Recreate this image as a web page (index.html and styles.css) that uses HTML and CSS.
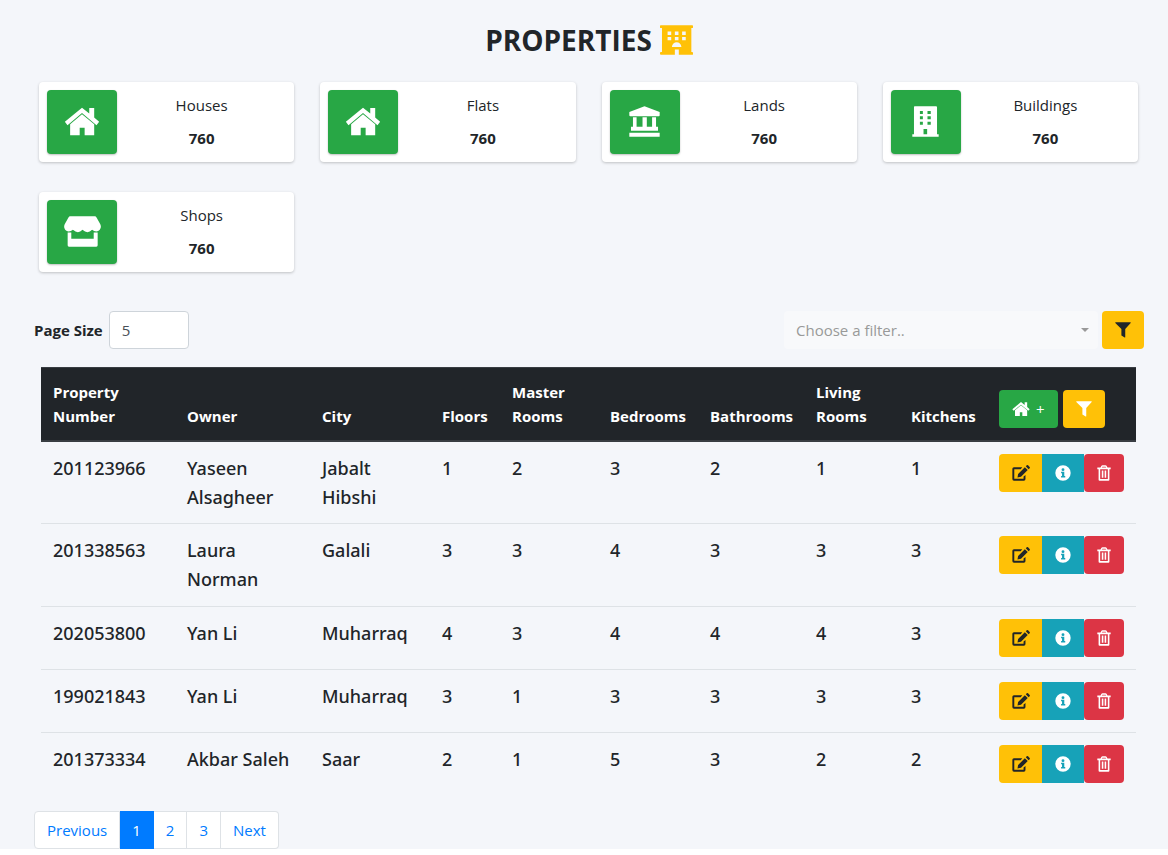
FILE: index.html
```
<!DOCTYPE html>
<html lang="en">
<head>
<meta charset="utf-8">
<title>Properties</title>
<link rel="stylesheet" href="styles.css">
</head>
<body>
<svg class="sprite" aria-hidden="true">
  <symbol id="home" viewBox="0 0 108 88"><path d="M54 2 2 45l8 10 44-37 44 37 8-10-15-13V3H76v17z"/><path d="M54 22 18 52v34h29V63h15v23h29V52z"/></symbol>
  <symbol id="bank" viewBox="0 0 94 94"><path d="M47 1 1 18v10q0 3 3 3h86q3 0 3-3V18zM12 34h11v29h18V34h13v29h16V34h12v29h6v12H6V63h6zM1 81h92v12H1z"/></symbol>
  <symbol id="building" viewBox="0 0 82 94"><path fill-rule="evenodd" d="M8 1h65q3 0 3 3v82h5v7H1v-7h5V4q0-3 2-3zM24 15v9h9v-9zm23 0v9h10v-9zM24 31v9h9v-9zm23 0v9h10v-9zM24 48v9h9v-9zm23 0v9h10v-9zM35 70v16h11V70z"/></symbol>
  <symbol id="shop" viewBox="0 0 112 94"><path d="M19 1h74q4 0 6 4l11 20c5 10-2 22-12 22q-7 0-13-5-7 7-14 7t-15-7q-7 7-14 7t-15-7q-6 5-13 5C4 47-3 35 2 25L13 5q2-4 6-4z"/><path d="M11 50h11v19h68V50h12v39q0 4-4 4H15q-4 0-4-4z"/></symbol>
  <symbol id="hotel" viewBox="0 0 100 90"><path fill-rule="evenodd" d="M2 0h96q2 0 2 3v4q0 2-3 2h-2v72h2q3 0 3 3v4q0 2-3 2H57V74H45v16H3q-3 0-3-3v-3q0-3 3-3h3V9H3Q0 9 0 7V3q0-3 2-3zM23 19v11h11V19zm22 0v11h11V19zm22 0v11h11V19zM23 36v10h11V36zm22 0v10h11V36zm22 0v10h11V36zM36 66h29c-1-19-28-19-29 0z"/></symbol>
  <symbol id="filter" viewBox="0 0 50 50"><path d="M2 1h46q2 0 1 2L32 22v25q0 3-3 1l-9-6V22L1 3Q0 1 2 1z"/></symbol>
  <symbol id="edit" viewBox="0 0 56 50"><path d="M32 7H6Q1 7 1 12v32q0 5 5 5h31q5 0 5-5V31l-6 5v7H7V13h20z"/><path d="M40 7 19 28l-2 11 11-2 21-21zM43 4l3-3q2-2 4 0l5 5q2 2 0 4l-3 3z"/></symbol>
  <symbol id="info" viewBox="0 0 50 50"><path fill-rule="evenodd" d="M25 1a24 24 0 1 0 0 48 24 24 0 0 0 0-48zm0 9a4 4 0 1 1 0 9 4 4 0 0 1 0-9zm-5 11h9v13h3v5H19v-5h3v-8h-3v-5z"/></symbol>
  <symbol id="trash" viewBox="0 0 44 50"><path fill-rule="evenodd" d="M1 8h10l3-6q1-1 3-1h10q2 0 3 1l3 6h10v5h-4v33q0 3-3 3H8q-3 0-3-3V13H1zm9 5v31h24V13zm5-5h14l-2-3H17z"/><path d="M15 17h5v23h-5zm9 0h5v23h-5z"/></symbol>
</svg>
<main class="page">
  <h1 class="title">PROPERTIES <svg class="title-icon"><use href="#hotel"/></svg></h1>
  <section class="cards">
    <article class="card"><div class="tile"><svg class="icon-home"><use href="#home"/></svg></div><div class="stat"><span>Houses</span><strong>760</strong></div></article>
    <article class="card"><div class="tile"><svg class="icon-home"><use href="#home"/></svg></div><div class="stat"><span>Flats</span><strong>760</strong></div></article>
    <article class="card"><div class="tile"><svg class="icon-bank"><use href="#bank"/></svg></div><div class="stat"><span>Lands</span><strong>760</strong></div></article>
    <article class="card"><div class="tile"><svg class="icon-building"><use href="#building"/></svg></div><div class="stat"><span>Buildings</span><strong>760</strong></div></article>
    <article class="card"><div class="tile"><svg class="icon-shop"><use href="#shop"/></svg></div><div class="stat"><span>Shops</span><strong>760</strong></div></article>
  </section>
  <div class="toolbar">
    <label class="size-label" for="size">Page Size</label>
    <input class="size" id="size" type="text" value="5">
    <div class="select-wrap"><select class="select" aria-label="Filter"><option>Choose a filter..</option></select></div>
    <button class="btn yellow dark" aria-label="Apply filter"><svg class="icon"><use href="#filter"/></svg></button>
  </div>
  <div class="table-wrap">
  <table class="table">
    <colgroup><col class="c-number"><col class="c-owner"><col class="c-city"><col class="c-floors"><col class="c-master"><col class="c-bed"><col class="c-bath"><col class="c-living"><col class="c-kitchen"><col class="c-actions"></colgroup>
    <thead><tr><th>Property Number</th><th>Owner</th><th>City</th><th>Floors</th><th>Master Rooms</th><th>Bedrooms</th><th>Bathrooms</th><th>Living Rooms</th><th>Kitchens</th>
      <th><div class="head-actions"><button class="btn green" aria-label="Add property"><svg class="icon wide"><use href="#home"/></svg><span class="plus">+</span></button><button class="btn yellow" aria-label="Filter columns"><svg class="icon"><use href="#filter"/></svg></button></div></th></tr></thead>
    <tbody>
      <tr><td>201123966</td><td>Yaseen Alsagheer</td><td>Jabalt Hibshi</td><td>1</td><td>2</td><td>3</td><td>2</td><td>1</td><td>1</td><td><div class="group"><button class="btn yellow dark" aria-label="Edit"><svg class="icon wide"><use href="#edit"/></svg></button><button class="btn teal" aria-label="Details"><svg class="icon"><use href="#info"/></svg></button><button class="btn red" aria-label="Delete"><svg class="icon narrow"><use href="#trash"/></svg></button></div></td></tr>
      <tr><td>201338563</td><td>Laura Norman</td><td>Galali</td><td>3</td><td>3</td><td>4</td><td>3</td><td>3</td><td>3</td><td><div class="group"><button class="btn yellow dark" aria-label="Edit"><svg class="icon wide"><use href="#edit"/></svg></button><button class="btn teal" aria-label="Details"><svg class="icon"><use href="#info"/></svg></button><button class="btn red" aria-label="Delete"><svg class="icon narrow"><use href="#trash"/></svg></button></div></td></tr>
      <tr><td>202053800</td><td>Yan Li</td><td>Muharraq</td><td>4</td><td>3</td><td>4</td><td>4</td><td>4</td><td>3</td><td><div class="group"><button class="btn yellow dark" aria-label="Edit"><svg class="icon wide"><use href="#edit"/></svg></button><button class="btn teal" aria-label="Details"><svg class="icon"><use href="#info"/></svg></button><button class="btn red" aria-label="Delete"><svg class="icon narrow"><use href="#trash"/></svg></button></div></td></tr>
      <tr><td>199021843</td><td>Yan Li</td><td>Muharraq</td><td>3</td><td>1</td><td>3</td><td>3</td><td>3</td><td>3</td><td><div class="group"><button class="btn yellow dark" aria-label="Edit"><svg class="icon wide"><use href="#edit"/></svg></button><button class="btn teal" aria-label="Details"><svg class="icon"><use href="#info"/></svg></button><button class="btn red" aria-label="Delete"><svg class="icon narrow"><use href="#trash"/></svg></button></div></td></tr>
      <tr><td>201373334</td><td>Akbar Saleh</td><td>Saar</td><td>2</td><td>1</td><td>5</td><td>3</td><td>2</td><td>2</td><td><div class="group"><button class="btn yellow dark" aria-label="Edit"><svg class="icon wide"><use href="#edit"/></svg></button><button class="btn teal" aria-label="Details"><svg class="icon"><use href="#info"/></svg></button><button class="btn red" aria-label="Delete"><svg class="icon narrow"><use href="#trash"/></svg></button></div></td></tr>
    </tbody>
  </table>
  </div>
  <nav class="pagination" aria-label="Pages"><a href="#">Previous</a><a class="active" href="#" aria-current="page">1</a><a href="#">2</a><a href="#">3</a><a href="#">Next</a></nav>
</main>
</body>
</html>
```
FILE: styles.css
```
* { box-sizing: border-box; }
body {
  margin: 0;
  background: #fff;
  color: #212529;
  font: 400 15px/24px "Open Sans", "Noto Sans", sans-serif;
}
.sprite { display: none; }
svg { fill: currentColor; flex: none; }
.page {
  padding: 22px 24px 0 34px;
  background: #f4f6fa;
}
.title {
  display: flex;
  align-items: center;
  justify-content: center;
  gap: 8px;
  margin: 0 0 24px;
  font-size: 28px;
  line-height: 36px;
  font-weight: 700;
}
.title-icon { width: 33px; height: 30px; color: #ffc107; }

.cards {
  display: grid;
  grid-template-columns: repeat(4, 1fr);
  gap: 30px 26px;
  padding: 0 6px 0 5px;
}
.card {
  display: flex;
  height: 80px;
  padding: 8px;
  background: #fff;
  border-radius: 4px;
  box-shadow: 0 1px 3px rgba(0, 0, 0, .22);
}
.tile {
  display: flex;
  align-items: center;
  justify-content: center;
  width: 70px;
  height: 64px;
  padding-bottom: 2px;
  background: #28a745;
  color: #fff;
  border-radius: 4px;
  box-shadow: 0 1px 2px rgba(0, 0, 0, .25);
}
.icon-home { width: 36px; height: 29px; }
.icon-bank { width: 31px; height: 31px; }
.icon-building { width: 27px; height: 31px; }
.icon-shop { width: 37px; height: 31px; }
.stat {
  flex: 1;
  display: flex;
  flex-direction: column;
  align-items: center;
  gap: 9px;
  padding-top: 3px;
}
.stat strong { font-weight: 700; }

.toolbar {
  display: flex;
  align-items: center;
  gap: 4px;
  padding-top: 39px;
}
.size-label { padding-right: 2px; font-weight: 700; }
.size {
  width: 80px;
  height: 38px;
  padding: 6px 12px;
  border: 1px solid #ced4da;
  border-radius: 4px;
  background: #fff;
  color: #495057;
  font: inherit;
}
.select-wrap { position: relative; width: 314px; margin-left: auto; }
.select-wrap::after {
  content: "";
  position: absolute;
  top: 17px;
  right: 9px;
  border: 4px solid transparent;
  border-top-color: #999;
  border-bottom: 0;
  pointer-events: none;
}
.select {
  display: block;
  appearance: none;
  width: 100%;
  height: 38px;
  padding: 0 12px;
  border: 0;
  border-radius: 4px;
  background: #f8f9fb;
  color: #999;
  font: inherit;
}
.btn {
  display: flex;
  align-items: center;
  justify-content: center;
  gap: 6px;
  height: 38px;
  padding: 0 13px;
  border: 0;
  border-radius: 4px;
  color: #fff;
  font: inherit;
}
.icon { width: 16px; height: 16px; }
.wide { width: 18px; }
.narrow { width: 14px; }
.plus { font-weight: 400; }
.yellow { background: #ffc107; }
.dark { color: #212529; }
.green { background: #28a745; }
.teal { background: #17a2b8; }
.red { background: #dc3545; }

.table-wrap { padding: 18px 8px 0 7px; }
.table {
  width: 100%;
  border-collapse: separate;
  border-spacing: 0;
  table-layout: fixed;
}
.c-number { width: 134px; }
.c-owner { width: 135px; }
.c-city { width: 120px; }
.c-floors { width: 70px; }
.c-master { width: 98px; }
.c-bed { width: 100px; }
.c-bath { width: 106px; }
.c-living { width: 95px; }
.c-kitchen { width: 88px; }
.c-actions { width: 149px; }
th {
  padding: 12px 0 12px 12px;
  background: #212529;
  border-top: 1px solid #383d42;
  border-bottom: 2px solid #383d42;
  color: #fff;
  font-weight: 700;
  text-align: left;
  vertical-align: bottom;
}
td {
  padding: 12px;
  border-top: 1px solid #dee2e6;
  font: 500 18px/29px "Noto Sans", "Open Sans", sans-serif;
  vertical-align: top;
}
tbody tr:first-child td { padding-bottom: 11px; border-top: 0; }
th:nth-child(1), th:nth-child(5), th:nth-child(8) { padding-right: 24px; }
.head-actions { display: flex; gap: 5px; }
.group { display: flex; }
.group .btn:nth-child(1) { width: 43px; padding: 0; border-radius: 4px 0 0 4px; }
.group .btn:nth-child(2) { border-radius: 0; }

.pagination { display: flex; padding-top: 16px; }
.pagination a {
  padding: 6px 12px;
  background: #fff;
  border: 1px solid #dee2e6;
  border-left-width: 0;
  color: #007bff;
  text-decoration: none;
}
.pagination a:first-child { border-left-width: 1px; border-radius: 4px 0 0 4px; }
.pagination a:last-child { border-radius: 0 4px 4px 0; }
.pagination .active { background: #007bff; border-color: #007bff; color: #fff; }
```
